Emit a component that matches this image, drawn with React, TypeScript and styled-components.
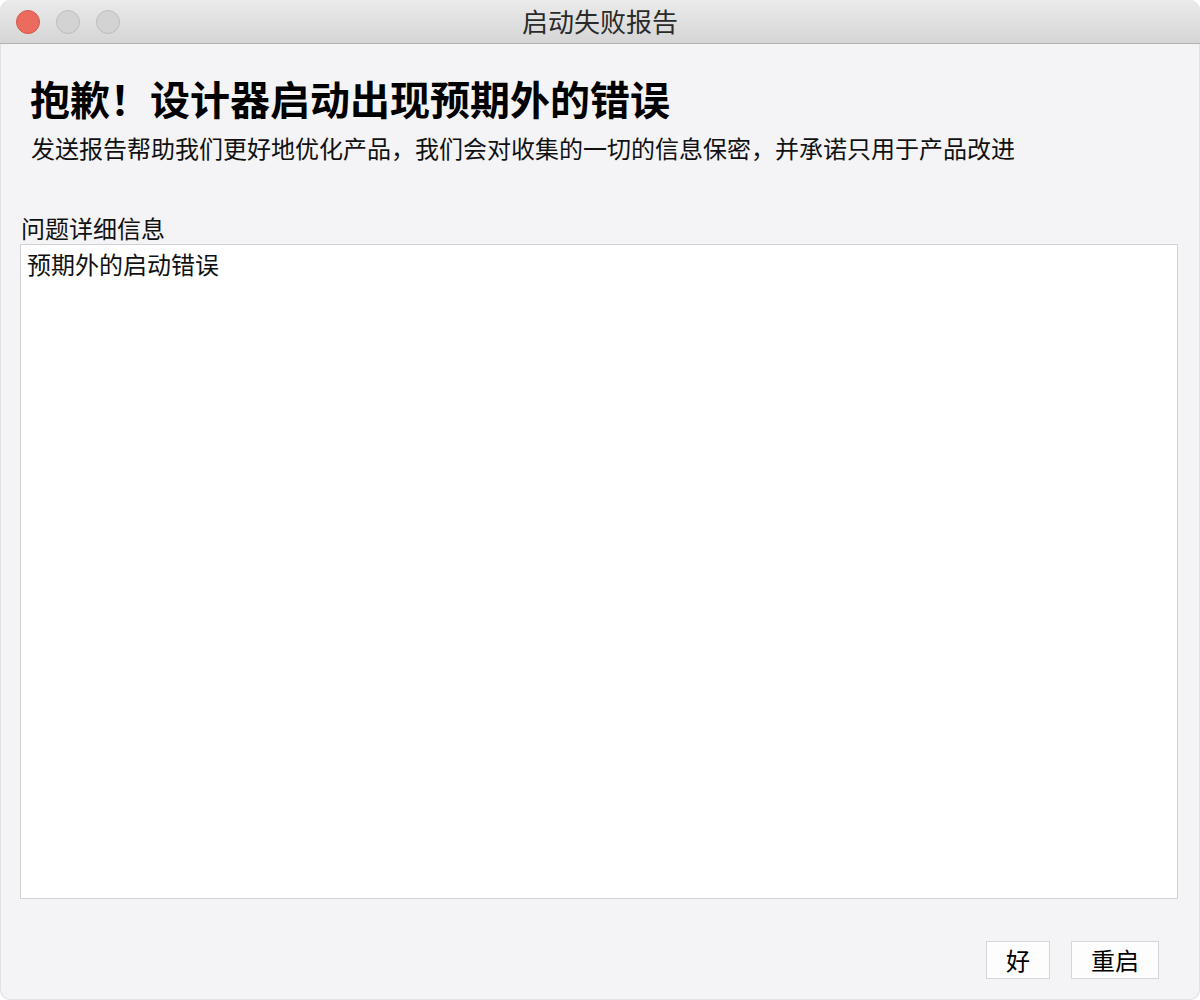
import React from "react";
import styled, { createGlobalStyle } from "styled-components";

const Global = createGlobalStyle`
  html, body { margin: 0; padding: 0; background: #ffffff; }
  body { font-family: "Noto Sans CJK SC", "Noto Sans", sans-serif; }
  * { box-sizing: border-box; }
`;

const Window = styled.div`
  width: 1200px;
  height: 1000px;
  background: #f4f4f6;
  border-radius: 10px;
  overflow: hidden;
  display: flex;
  flex-direction: column;
  box-shadow: inset 0 0 0 1px #e2e2e4;
`;

const TitleBar = styled.div`
  height: 44px;
  flex: none;
  position: relative;
  display: flex;
  align-items: center;
  justify-content: center;
  background: linear-gradient(#ebebeb, #d5d5d5);
  border-bottom: 1px solid #b2b2b2;
`;

const Lights = styled.div`
  position: absolute;
  left: 16px;
  top: 10px;
  display: flex;
  gap: 16px;
`;

const Light = styled.span<{ $color: string; $border: string }>`
  width: 24px;
  height: 24px;
  border-radius: 50%;
  background: ${(p) => p.$color};
  border: 1px solid ${(p) => p.$border};
`;

const Title = styled.div`
  font-size: 26px;
  line-height: 32px;
  color: #2a2a2a;
  margin-top: -2px;
`;

const Body = styled.div`
  flex: 1;
  display: flex;
  flex-direction: column;
  padding: 0 22px 22px 20px;
`;

const Heading = styled.h1`
  margin: 30px 0 0 10px;
  font-size: 40px;
  line-height: 48px;
  font-weight: 700;
  color: #000;
`;

const Sub = styled.p`
  margin: 10px 0 0 11px;
  font-size: 24px;
  line-height: 32px;
  color: #111;
`;

const Label = styled.div`
  margin: 50px 0 0 1px;
  font-size: 24px;
  line-height: 28px;
  color: #111;
`;

const DetailBox = styled.div`
  margin-top: 2px;
  height: 655px;
  background: #fff;
  border: 1px solid #d2d2d4;
  padding: 5px 6px;
  font-size: 24px;
  line-height: 28px;
  color: #111;
`;

const Actions = styled.div`
  margin-top: 42px;
  display: flex;
  justify-content: flex-end;
  gap: 21px;
  padding-right: 19px;
`;

const Button = styled.button<{ $w: number }>`
  width: ${(p) => p.$w}px;
  height: 38px;
  background: #fdfdfd;
  border: 1px solid #d6d6d8;
  border-radius: 0;
  font-family: "Noto Sans CJK SC", "Noto Sans", sans-serif;
  font-size: 24px;
  line-height: 28px;
  color: #000;
  padding: 0;
`;

export default function App() {
  return (
    <>
      <Global />
      <Window>
        <TitleBar>
          <Lights>
            <Light $color="#ec6b5f" $border="#d5564b" />
            <Light $color="#d3d3d3" $border="#bcbcbc" />
            <Light $color="#d3d3d3" $border="#bcbcbc" />
          </Lights>
          <Title>启动失败报告</Title>
        </TitleBar>
        <Body>
          <Heading>抱歉！设计器启动出现预期外的错误</Heading>
          <Sub>发送报告帮助我们更好地优化产品，我们会对收集的一切的信息保密，并承诺只用于产品改进</Sub>
          <Label>问题详细信息</Label>
          <DetailBox>预期外的启动错误</DetailBox>
          <Actions>
            <Button $w={64}>好</Button>
            <Button $w={88}>重启</Button>
          </Actions>
        </Body>
      </Window>
    </>
  );
}
